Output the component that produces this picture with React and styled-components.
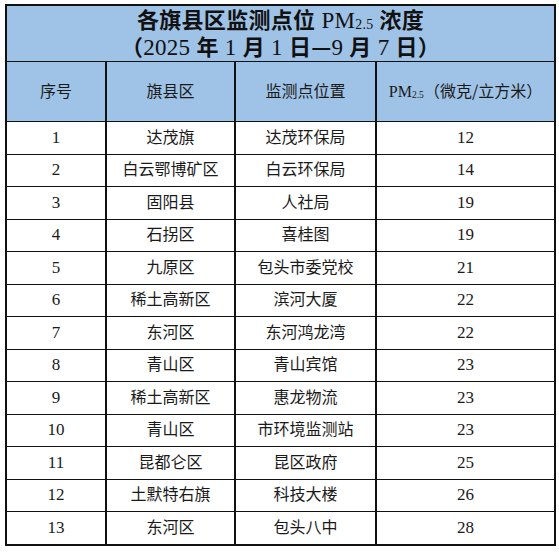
import React from 'react';
import styled, { createGlobalStyle } from 'styled-components';

const GlobalStyle = createGlobalStyle`
  html, body {
    margin: 0;
    padding: 0;
    background: #fff;
  }
`;

const Page = styled.div`
  padding: 4px 0 0 5px;
  width: 559px;
  height: 552px;
  box-sizing: border-box;
`;

const Table = styled.table`
  border-collapse: collapse;
  table-layout: fixed;
  width: 549px;
  font-family: "Liberation Serif", "Noto Sans CJK SC", serif;
  color: #1a1a1a;
  border: 2px solid #111;
`;

const Cell = styled.td`
  border-left: 2px solid #111;
  border-right: 2px solid #111;
  border-top: 1.5px solid #111;
  border-bottom: 1.5px solid #111;
  text-align: center;
  vertical-align: middle;
  padding: 0;
  height: ${(p) => p.$h || 31.5}px;
  font-size: 17px;
  background: ${(p) => (p.$blue ? '#9fc3e6' : '#fff')};
`;

const TitleCell = styled(Cell)`
  font-size: 23px;
  color: #111;
  letter-spacing: 0.3px;
`;

const TitleLine = styled.div`
  height: 27px;
  line-height: 27px;
  white-space: nowrap;
`;

const HeadCell = styled(Cell)`
  font-size: 16px;
`;

const Han = styled.span`
  font-family: "Noto Sans CJK SC", sans-serif;
  font-size: ${(p) => (p.$bold ? '22px' : '16px')};
  font-weight: ${(p) => (p.$bold ? 700 : 400)};
  line-height: 1;
`;

const Sub = styled.span`
  font-size: 0.6em;
  position: relative;
  top: 0.1em;
  line-height: 1;
`;

const rows = [
  ['1', '达茂旗', '达茂环保局', '12'],
  ['2', '白云鄂博矿区', '白云环保局', '14'],
  ['3', '固阳县', '人社局', '19'],
  ['4', '石拐区', '喜桂图', '19'],
  ['5', '九原区', '包头市委党校', '21'],
  ['6', '稀土高新区', '滨河大厦', '22'],
  ['7', '东河区', '东河鸿龙湾', '22'],
  ['8', '青山区', '青山宾馆', '23'],
  ['9', '稀土高新区', '惠龙物流', '23'],
  ['10', '青山区', '市环境监测站', '23'],
  ['11', '昆都仑区', '昆区政府', '25'],
  ['12', '土默特右旗', '科技大楼', '26'],
  ['13', '东河区', '包头八中', '28'],
];

export default function App() {
  return (
    <>
      <GlobalStyle />
      <Page>
        <Table>
          <colgroup>
            <col style={{ width: 100 }} />
            <col style={{ width: 129 }} />
            <col style={{ width: 141 }} />
            <col style={{ width: 179 }} />
          </colgroup>
          <tbody>
            <tr>
              <TitleCell colSpan={4} $blue $h={55}>
                <TitleLine>
                  <Han $bold>各旗县区监测点位</Han> PM<Sub>2.5</Sub> <Han $bold>浓度</Han>
                </TitleLine>
                <TitleLine>
                  <Han $bold>（</Han>2025 <Han $bold>年</Han> 1 <Han $bold>月</Han> 1 <Han $bold>日—</Han>9 <Han $bold>月</Han> 7 <Han $bold>日）</Han>
                </TitleLine>
              </TitleCell>
            </tr>
            <tr>
              <HeadCell $blue $h={59}><Han>序号</Han></HeadCell>
              <HeadCell $blue $h={59}><Han>旗县区</Han></HeadCell>
              <HeadCell $blue $h={59}><Han>监测点位置</Han></HeadCell>
              <HeadCell $blue $h={59}>PM<Sub>2.5</Sub><Han>（微克/立方米）</Han></HeadCell>
            </tr>
            {rows.map((r) => (
              <tr key={r[0]}>
                <Cell>{r[0]}</Cell>
                <Cell><Han>{r[1]}</Han></Cell>
                <Cell><Han>{r[2]}</Han></Cell>
                <Cell>{r[3]}</Cell>
              </tr>
            ))}
          </tbody>
        </Table>
      </Page>
    </>
  );
}
